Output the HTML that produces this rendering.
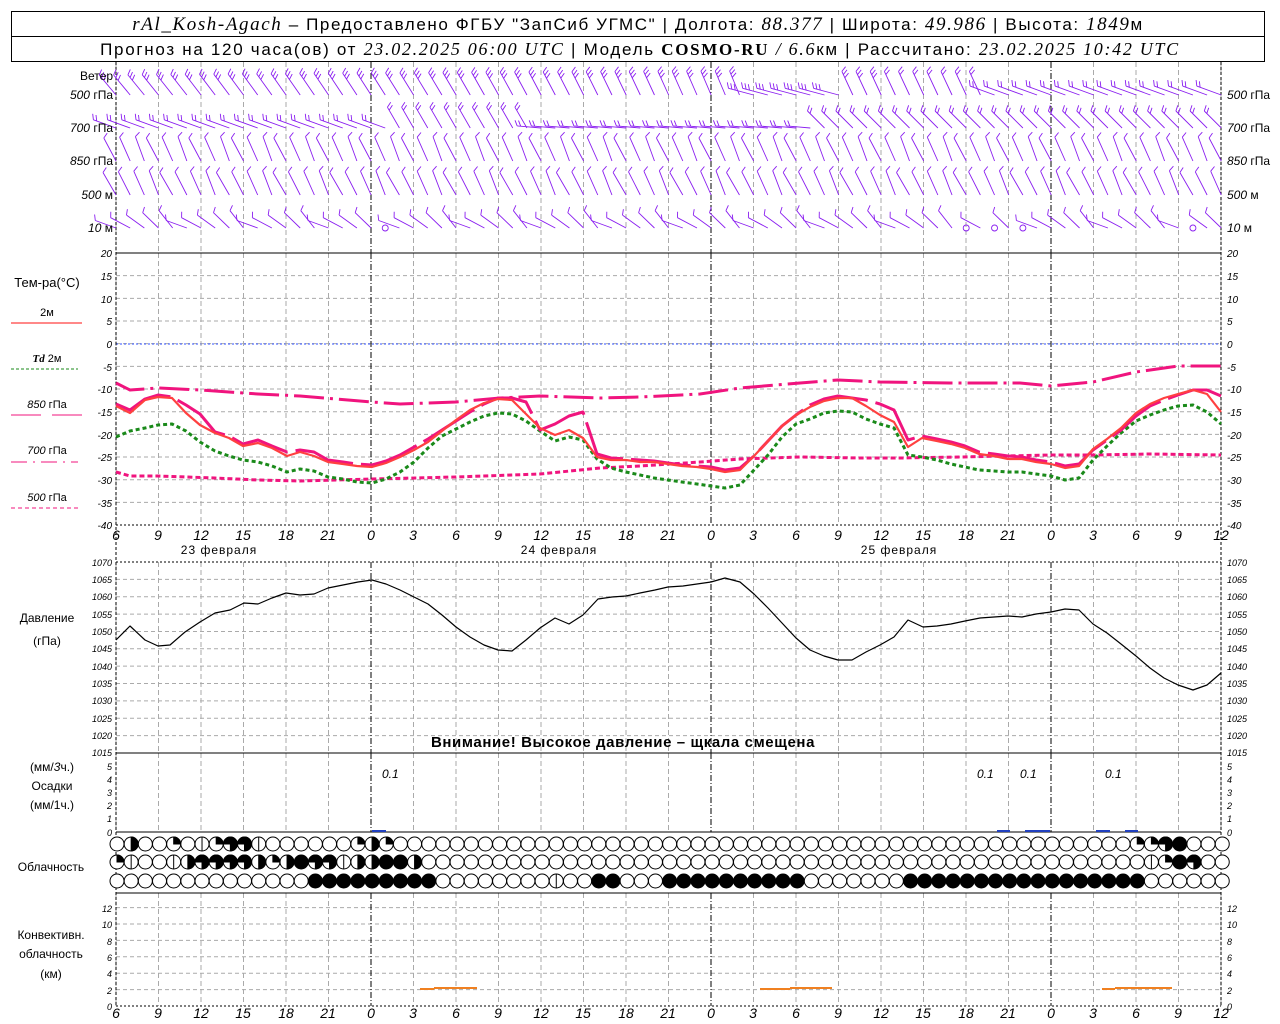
<!DOCTYPE html>
<html><head><meta charset="utf-8"><style>
html,body{margin:0;padding:0;background:#fff;}
svg{display:block;font-family:"Liberation Sans","DejaVu Sans",sans-serif;}
.hd{font-size:17px;fill:#000;}
.it{font-family:"Liberation Serif",serif;font-style:italic;}
.lab{font-size:12px;fill:#000;}
.tk{font-size:10px;font-style:italic;fill:#000;}
.ax{font-size:14px;font-style:italic;fill:#000;}
</style></head><body>
<svg id="s" width="1280" height="1024" viewBox="0 0 1280 1024" xmlns="http://www.w3.org/2000/svg">
<rect x="11.5" y="11.5" width="1253" height="50" fill="none" stroke="#000"/>
<line x1="11" y1="36.5" x2="1265" y2="36.5" stroke="#000"/>
<text x="638" y="30" text-anchor="middle" class="hd" letter-spacing="1.6"><tspan class="it" font-size="19">rAl_Kosh-Agach</tspan> – Предоставлено ФГБУ "ЗапСиб УГМС" | Долгота: <tspan class="it" font-size="19">88.377</tspan> | Широта: <tspan class="it" font-size="19">49.986</tspan> | Высота: <tspan class="it" font-size="19">1849</tspan>м</text>
<text x="640" y="55" text-anchor="middle" class="hd" font-size="16" letter-spacing="1.7">Прогноз на 120 часа(ов) от <tspan class="it" font-size="18">23.02.2025 06:00 UTC</tspan>  | Модель <tspan font-family="Liberation Serif" font-weight="bold" font-size="17">COSMO-RU</tspan> <tspan class="it" font-size="18">/ 6.6</tspan>км | Рассчитано: <tspan class="it" font-size="18">23.02.2025 10:42 UTC</tspan></text>

<g id="grid"></g>
<g id="barbs" stroke="#8a1ef0" stroke-width="0.9" fill="none"></g>

<g class="lab" font-size="11">
<text x="113" y="80" text-anchor="end" font-size="12">Ветер</text>
<text x="113" y="99" text-anchor="end"><tspan font-style="italic">500</tspan> гПа</text>
<text x="113" y="132" text-anchor="end"><tspan font-style="italic">700</tspan> гПа</text>
<text x="113" y="165" text-anchor="end"><tspan font-style="italic">850</tspan> гПа</text>
<text x="113" y="199" text-anchor="end"><tspan font-style="italic">500</tspan> м</text>
<text x="113" y="232" text-anchor="end"><tspan font-style="italic">10</tspan>   м</text>
<text x="1227" y="99"><tspan font-style="italic">500</tspan> гПа</text>
<text x="1227" y="132"><tspan font-style="italic">700</tspan> гПа</text>
<text x="1227" y="165"><tspan font-style="italic">850</tspan> гПа</text>
<text x="1227" y="199"><tspan font-style="italic">500</tspan> м</text>
<text x="1227" y="232"><tspan font-style="italic">10</tspan>   м</text>
</g>

<g class="lab">
<text x="47" y="287" text-anchor="middle" font-size="13">Тем-ра(°С)</text>
<text x="47" y="316" text-anchor="middle" font-size="11">2м</text>
<line x1="11" y1="323" x2="82" y2="323" stroke="#ff4040" stroke-width="1.2"/>
<text x="47" y="362" text-anchor="middle" font-size="11"><tspan class="it" font-weight="bold">Td</tspan>  2м</text>
<line x1="11" y1="369" x2="78" y2="369" stroke="#1a8a1a" stroke-dasharray="3,2"/>
<text x="47" y="408" text-anchor="middle" font-size="11"><tspan font-style="italic">850</tspan> гПа</text>
<line x1="11" y1="415" x2="41" y2="415" stroke="#f0147e"/><line x1="52" y1="415" x2="82" y2="415" stroke="#f0147e"/>
<text x="47" y="454" text-anchor="middle" font-size="11"><tspan font-style="italic">700</tspan> гПа</text>
<line x1="11" y1="462" x2="78" y2="462" stroke="#f0147e" stroke-dasharray="16,6,2,6"/>
<text x="47" y="501" text-anchor="middle" font-size="11"><tspan font-style="italic">500</tspan> гПа</text>
<line x1="11" y1="508" x2="78" y2="508" stroke="#f0147e" stroke-dasharray="4,3"/>
<text x="47" y="622" text-anchor="middle">Давление</text>
<text x="47" y="645" text-anchor="middle">(гПа)</text>
<text x="52" y="771" text-anchor="middle">(мм/<tspan font-style="italic">3</tspan>ч.)</text>
<text x="52" y="790" text-anchor="middle">Осадки</text>
<text x="52" y="809" text-anchor="middle">(мм/1ч.)</text>
<text x="51" y="871" text-anchor="middle">Облачность</text>
<text x="51" y="939" text-anchor="middle">Конвективн.</text>
<text x="51" y="958" text-anchor="middle">облачность</text>
<text x="51" y="978" text-anchor="middle">(км)</text>
</g>
<g id="ticks" class="tk">
<text x="112" y="257" text-anchor="end">20</text><text x="1227" y="257">20</text>
<text x="112" y="280" text-anchor="end">15</text><text x="1227" y="280">15</text>
<text x="112" y="303" text-anchor="end">10</text><text x="1227" y="303">10</text>
<text x="112" y="325" text-anchor="end">5</text><text x="1227" y="325">5</text>
<text x="112" y="348" text-anchor="end">0</text><text x="1227" y="348">0</text>
<text x="112" y="371" text-anchor="end">-5</text><text x="1227" y="371">-5</text>
<text x="112" y="393" text-anchor="end">-10</text><text x="1227" y="393">-10</text>
<text x="112" y="416" text-anchor="end">-15</text><text x="1227" y="416">-15</text>
<text x="112" y="439" text-anchor="end">-20</text><text x="1227" y="439">-20</text>
<text x="112" y="461" text-anchor="end">-25</text><text x="1227" y="461">-25</text>
<text x="112" y="484" text-anchor="end">-30</text><text x="1227" y="484">-30</text>
<text x="112" y="507" text-anchor="end">-35</text><text x="1227" y="507">-35</text>
<text x="112" y="529" text-anchor="end">-40</text><text x="1227" y="529">-40</text>
<g font-size="9">
<text x="112" y="566" text-anchor="end">1070</text><text x="1227" y="566">1070</text>
<text x="112" y="583" text-anchor="end">1065</text><text x="1227" y="583">1065</text>
<text x="112" y="600" text-anchor="end">1060</text><text x="1227" y="600">1060</text>
<text x="112" y="618" text-anchor="end">1055</text><text x="1227" y="618">1055</text>
<text x="112" y="635" text-anchor="end">1050</text><text x="1227" y="635">1050</text>
<text x="112" y="652" text-anchor="end">1045</text><text x="1227" y="652">1045</text>
<text x="112" y="670" text-anchor="end">1040</text><text x="1227" y="670">1040</text>
<text x="112" y="687" text-anchor="end">1035</text><text x="1227" y="687">1035</text>
<text x="112" y="704" text-anchor="end">1030</text><text x="1227" y="704">1030</text>
<text x="112" y="722" text-anchor="end">1025</text><text x="1227" y="722">1025</text>
<text x="112" y="739" text-anchor="end">1020</text><text x="1227" y="739">1020</text>
<text x="112" y="756" text-anchor="end">1015</text><text x="1227" y="756">1015</text>
<text x="112" y="770" text-anchor="end">5</text><text x="1227" y="770">5</text>
<text x="112" y="783" text-anchor="end">4</text><text x="1227" y="783">4</text>
<text x="112" y="796" text-anchor="end">3</text><text x="1227" y="796">3</text>
<text x="112" y="809" text-anchor="end">2</text><text x="1227" y="809">2</text>
<text x="112" y="822" text-anchor="end">1</text><text x="1227" y="822">1</text>
<text x="112" y="836" text-anchor="end">0</text><text x="1227" y="836">0</text>
<text x="112" y="912" text-anchor="end">12</text><text x="1227" y="912">12</text>
<text x="112" y="928" text-anchor="end">10</text><text x="1227" y="928">10</text>
<text x="112" y="945" text-anchor="end">8</text><text x="1227" y="945">8</text>
<text x="112" y="961" text-anchor="end">6</text><text x="1227" y="961">6</text>
<text x="112" y="977" text-anchor="end">4</text><text x="1227" y="977">4</text>
<text x="112" y="994" text-anchor="end">2</text><text x="1227" y="994">2</text>
<text x="112" y="1010" text-anchor="end">0</text><text x="1227" y="1010">0</text>
</g>
</g>
<g class="ax" text-anchor="middle">
<text x="116" y="540">6</text><text x="158" y="540">9</text><text x="201" y="540">12</text><text x="243" y="540">15</text><text x="286" y="540">18</text><text x="328" y="540">21</text><text x="371" y="540">0</text><text x="413" y="540">3</text><text x="456" y="540">6</text><text x="498" y="540">9</text><text x="541" y="540">12</text><text x="583" y="540">15</text><text x="626" y="540">18</text><text x="668" y="540">21</text><text x="711" y="540">0</text><text x="753" y="540">3</text><text x="796" y="540">6</text><text x="838" y="540">9</text><text x="881" y="540">12</text><text x="923" y="540">15</text><text x="966" y="540">18</text><text x="1008" y="540">21</text><text x="1051" y="540">0</text><text x="1093" y="540">3</text><text x="1136" y="540">6</text><text x="1178" y="540">9</text><text x="1221" y="540">12</text>
<text x="116" y="1018">6</text><text x="158" y="1018">9</text><text x="201" y="1018">12</text><text x="243" y="1018">15</text><text x="286" y="1018">18</text><text x="328" y="1018">21</text><text x="371" y="1018">0</text><text x="413" y="1018">3</text><text x="456" y="1018">6</text><text x="498" y="1018">9</text><text x="541" y="1018">12</text><text x="583" y="1018">15</text><text x="626" y="1018">18</text><text x="668" y="1018">21</text><text x="711" y="1018">0</text><text x="753" y="1018">3</text><text x="796" y="1018">6</text><text x="838" y="1018">9</text><text x="881" y="1018">12</text><text x="923" y="1018">15</text><text x="966" y="1018">18</text><text x="1008" y="1018">21</text><text x="1051" y="1018">0</text><text x="1093" y="1018">3</text><text x="1136" y="1018">6</text><text x="1178" y="1018">9</text><text x="1221" y="1018">12</text>
</g>
<g class="lab" font-size="12" text-anchor="middle" letter-spacing="1">
<text x="219" y="554">23 февраля</text><text x="559" y="554">24 февраля</text><text x="899" y="554">25 февраля</text>
</g>
<text x="623" y="747" text-anchor="middle" font-size="15" font-weight="bold" fill="#000" letter-spacing="0.6">Внимание! Высокое давление – щкала смещена</text>
<g font-size="12" font-style="italic" fill="#000">
<text x="382" y="778">0.1</text><text x="977" y="778">0.1</text><text x="1020" y="778">0.1</text><text x="1105" y="778">0.1</text>
</g>

<g fill="none" stroke-linejoin="round">
<polyline stroke="#f0147e" stroke-width="3" stroke-dasharray="30,6,3,6" points="116,383 130,390 158,388 200,390 258,394 300,396 372,402 400,404 456,402 500,398 540,396 600,398 640,397 700,394 740,388 800,383 838,380 880,382 950,383 1020,383 1051,386 1093,382 1136,372 1178,366 1221,366"/>
<polyline stroke="#f0147e" stroke-width="3" stroke-dasharray="5,3" points="116,472 130,476 158,476 215,478 258,480 300,481 372,479 456,477 540,474 600,468 640,466 700,462 740,459 800,457 860,458 900,458 960,457 1051,455 1093,455 1150,454 1221,455"/>
<polyline stroke="#1a8a1a" stroke-width="3" stroke-dasharray="4,3" points="116,437 130,431 145,428 158,425 172,424 186,431 200,442 215,451 229,456 243,460 258,462 272,466 287,472 300,469 314,471 328,477 343,479 357,482 372,483 386,479 400,472 414,462 428,448 442,436 456,429 470,422 484,416 498,413 512,414 526,421 540,431 555,441 569,437 583,440 597,459 611,468 626,472 640,475 654,478 668,480 682,482 697,484 711,486 725,488 740,485 754,470 768,455 782,437 796,424 810,419 824,413 838,411 852,412 866,419 880,424 894,428 908,455 922,457 937,460 951,464 965,467 979,470 994,471 1008,472 1022,472 1036,474 1051,476 1065,480 1079,478 1093,460 1107,446 1121,433 1136,421 1150,415 1164,410 1178,406 1193,405 1207,412 1221,424"/>
<polyline stroke="#f0147e" stroke-width="3" stroke-dasharray="60,8" points="116,404 130,410 145,399 158,395 172,397 186,405 200,414 215,432 229,436 243,444 258,440 272,446 287,452 300,450 314,452 328,460 343,462 357,464 372,465 386,461 400,455 414,447 428,439 442,430 456,421 470,412 484,404 498,398 512,398 526,402 540,430 555,424 569,416 583,412 597,454 611,458 626,459 640,460 654,461 668,463 682,465 697,466 711,467 725,470 740,468 754,456 768,441 782,426 796,415 810,405 824,399 838,396 852,398 866,400 880,404 894,410 908,440 922,436 937,439 951,442 965,446 979,452 994,454 1008,456 1022,457 1036,460 1051,462 1065,466 1079,464 1093,450 1107,440 1121,430 1136,416 1150,406 1164,400 1178,395 1193,390 1207,390 1221,396"/>
<polyline stroke="#ff4040" stroke-width="2.2" points="116,406 130,413 145,400 158,397 172,398 186,413 200,425 215,433 229,438 243,446 258,443 272,448 287,456 300,452 314,456 328,462 343,464 357,466 372,467 386,463 400,457 414,450 428,442 442,431 456,420 470,410 484,403 498,399 512,400 526,414 540,428 555,435 569,430 583,438 597,457 611,460 626,460 640,462 654,462 668,464 682,466 697,467 711,469 725,472 740,470 754,456 768,441 782,426 796,415 810,407 824,401 838,398 852,398 866,406 880,415 894,422 908,447 922,438 937,441 951,444 965,448 979,454 994,456 1008,459 1022,459 1036,462 1051,464 1065,468 1079,466 1093,449 1107,439 1121,428 1136,413 1150,404 1164,398 1178,394 1193,390 1207,394 1221,412"/>
<polyline stroke="#000" stroke-width="1.2" points="116,640 130,626 145,640 158,646 170,645 185,632 200,622 215,613 230,610 244,603 258,604 272,598 286,593 300,595 314,594 328,588 343,585 358,582 372,580 386,584 400,590 414,597 428,604 442,615 456,627 470,637 484,645 498,650 512,651 526,640 540,628 555,618 569,624 583,615 598,599 612,597 626,596 640,593 655,590 668,587 683,586 697,584 711,582 725,578 740,582 754,594 768,608 782,623 796,638 810,650 824,656 838,660 852,660 866,652 880,645 894,637 908,620 923,627 937,626 951,624 965,621 980,618 994,617 1008,616 1022,617 1036,614 1051,612 1065,609 1079,610 1093,624 1107,633 1121,644 1136,656 1150,668 1164,678 1178,685 1193,690 1207,685 1221,673"/>
<g stroke="#2040c0" stroke-width="2"><line x1="372" y1="831" x2="386" y2="831"/><line x1="997" y1="831" x2="1010" y2="831"/><line x1="1025" y1="831" x2="1050" y2="831"/><line x1="1096" y1="831" x2="1110" y2="831"/><line x1="1125" y1="831" x2="1138" y2="831"/></g>
<g stroke="#f08020" stroke-width="2"><line x1="420" y1="989" x2="434" y2="989"/><line x1="434" y1="988" x2="477" y2="988"/><line x1="760" y1="989" x2="790" y2="989"/><line x1="790" y1="988" x2="832" y2="988"/><line x1="1102" y1="989" x2="1115" y2="989"/><line x1="1115" y1="988" x2="1172" y2="988"/></g>
</g>
<g id="clouds" stroke="#000" stroke-width="1"></g>
</svg>
<script>
var NS="http://www.w3.org/2000/svg";
function el(p,t,a){var e=document.createElementNS(NS,t);for(var k in a)e.setAttribute(k,a[k]);p.appendChild(e);return e;}
var g=document.getElementById('grid');
var X0=116,DX=42.5;
function hline(y,dash,col,w){el(g,'line',{x1:116,x2:1221,y1:y,y2:y,stroke:col||'#aaa','stroke-dasharray':dash||'4,3','stroke-width':w||1});}
for(var k=1;k<12;k++)hline(253+k*22.67);
hline(344,'2,2','#3050ff');
for(var k=1;k<11;k++)hline(562+k*17.36);
for(var k=1;k<7;k++)hline(1006-k*16.4);
var panels=[[62,253],[253,525],[562,753],[753,832],[893,1006]];
for(var i=0;i<27;i++){var x=X0+i*DX;var mid=(i%8==6);
 panels.forEach(function(p){el(g,'line',{x1:x,x2:x,y1:p[0],y2:p[1],stroke:mid?'#000':'#aaa','stroke-dasharray':mid?'6,2,1,2':'5,3'});});}
[116,1221].forEach(function(x){el(g,'line',{x1:x,x2:x,y1:62,y2:1006,stroke:'#000','stroke-dasharray':'3,2'});});
hline(253,'none','#000');hline(525,'2,2','#000');hline(562,'2,2','#000');hline(753,'none','#000');hline(832,'none','#000');hline(893,'none','#000');hline(1006,'2,2','#000');
var b=document.getElementById('barbs');
function barb(x,y,ang,len,nb){var r=ang*Math.PI/180;var ex=x+len*Math.sin(r),ey=y-len*Math.cos(r);
 var d='M'+x+' '+y+'L'+ex.toFixed(1)+' '+ey.toFixed(1);
 for(var j=0;j<nb;j++){var t=len-j*3.5;var px=x+t*Math.sin(r),py=y-t*Math.cos(r);var rr=r+1.1;d+='M'+px.toFixed(1)+' '+py.toFixed(1)+'l'+(6*Math.sin(rr)).toFixed(1)+' '+(-6*Math.cos(rr)).toFixed(1);}
 el(b,'path',{d:d});}
for(var k=0;k<79;k++){var x=X0+k*14.17;
 var a1=k<45?-40+k*0.4:(k<52?-75:(k<62?-25:-70));barb(x,95,a1,26,k<55?3:2);
 var a2=k<20?-70:(k<30?-30:(k<50?-85:-45));barb(x,128,a2,24,2);
 barb(x,161,-28+(k%3)*4,26,1);
 barb(x,195,-30+(k%4)*3,26,1);
 if(k==19||k==60||k==76||k==62||k==64){el(b,'circle',{cx:x,cy:228,r:3});}else barb(x,228,-70+(k%5)*8,22,1);
}
var rows=[
 [0,4,0,0,2,0,1,2,6,7,1,0,0,0,0,0,0,2,4,2],
 [2,1,0,0,1,4,6,6,7,6,4,2,4,8,6,7,1,4,4,8,8,4],
 []];
var r3=[];for(var k=0;k<79;k++){var v=0;if(k>=14&&k<=22)v=8;if(k==34||k==35)v=8;if(k>=39&&k<=48)v=8;if(k>=56&&k<=72)v=8;if(k==31)v=1;r3.push(v);}
rows[2]=r3;
while(rows[0].length<79)rows[0].push(0);while(rows[1].length<79)rows[1].push(0);
rows[0][72]=2;rows[0][73]=2;rows[0][74]=6;rows[0][75]=8;rows[1][73]=1;rows[1][74]=2;rows[1][75]=8;rows[1][76]=7;
var cg=document.getElementById('clouds');var ys=[844,862,881];
for(var r=0;r<3;r++)for(var k=0;k<79;k++){var x=117+k*14.17,y=ys[r],v=rows[r][k],R=7;
 if(v==8){el(cg,'circle',{cx:x,cy:y,r:R,fill:'#000'});continue;}
 el(cg,'circle',{cx:x,cy:y,r:R,fill:'#fff'});
 if(v==1||v==7)el(cg,'line',{x1:x,x2:x,y1:y-R,y2:y+R});
 if(v==2)el(cg,'path',{d:'M'+x+' '+y+'V'+(y-R)+'A'+R+' '+R+' 0 0 1 '+(x+R)+' '+y+'Z',fill:'#000'});
 if(v==4)el(cg,'path',{d:'M'+x+' '+(y-R)+'A'+R+' '+R+' 0 0 1 '+x+' '+(y+R)+'Z',fill:'#000'});
 if(v==6||v==7)el(cg,'path',{d:'M'+x+' '+y+'H'+(x-R)+'A'+R+' '+R+' 0 1 1 '+x+' '+(y+R)+'Z',fill:'#000'});
}
</script>
</body></html>
